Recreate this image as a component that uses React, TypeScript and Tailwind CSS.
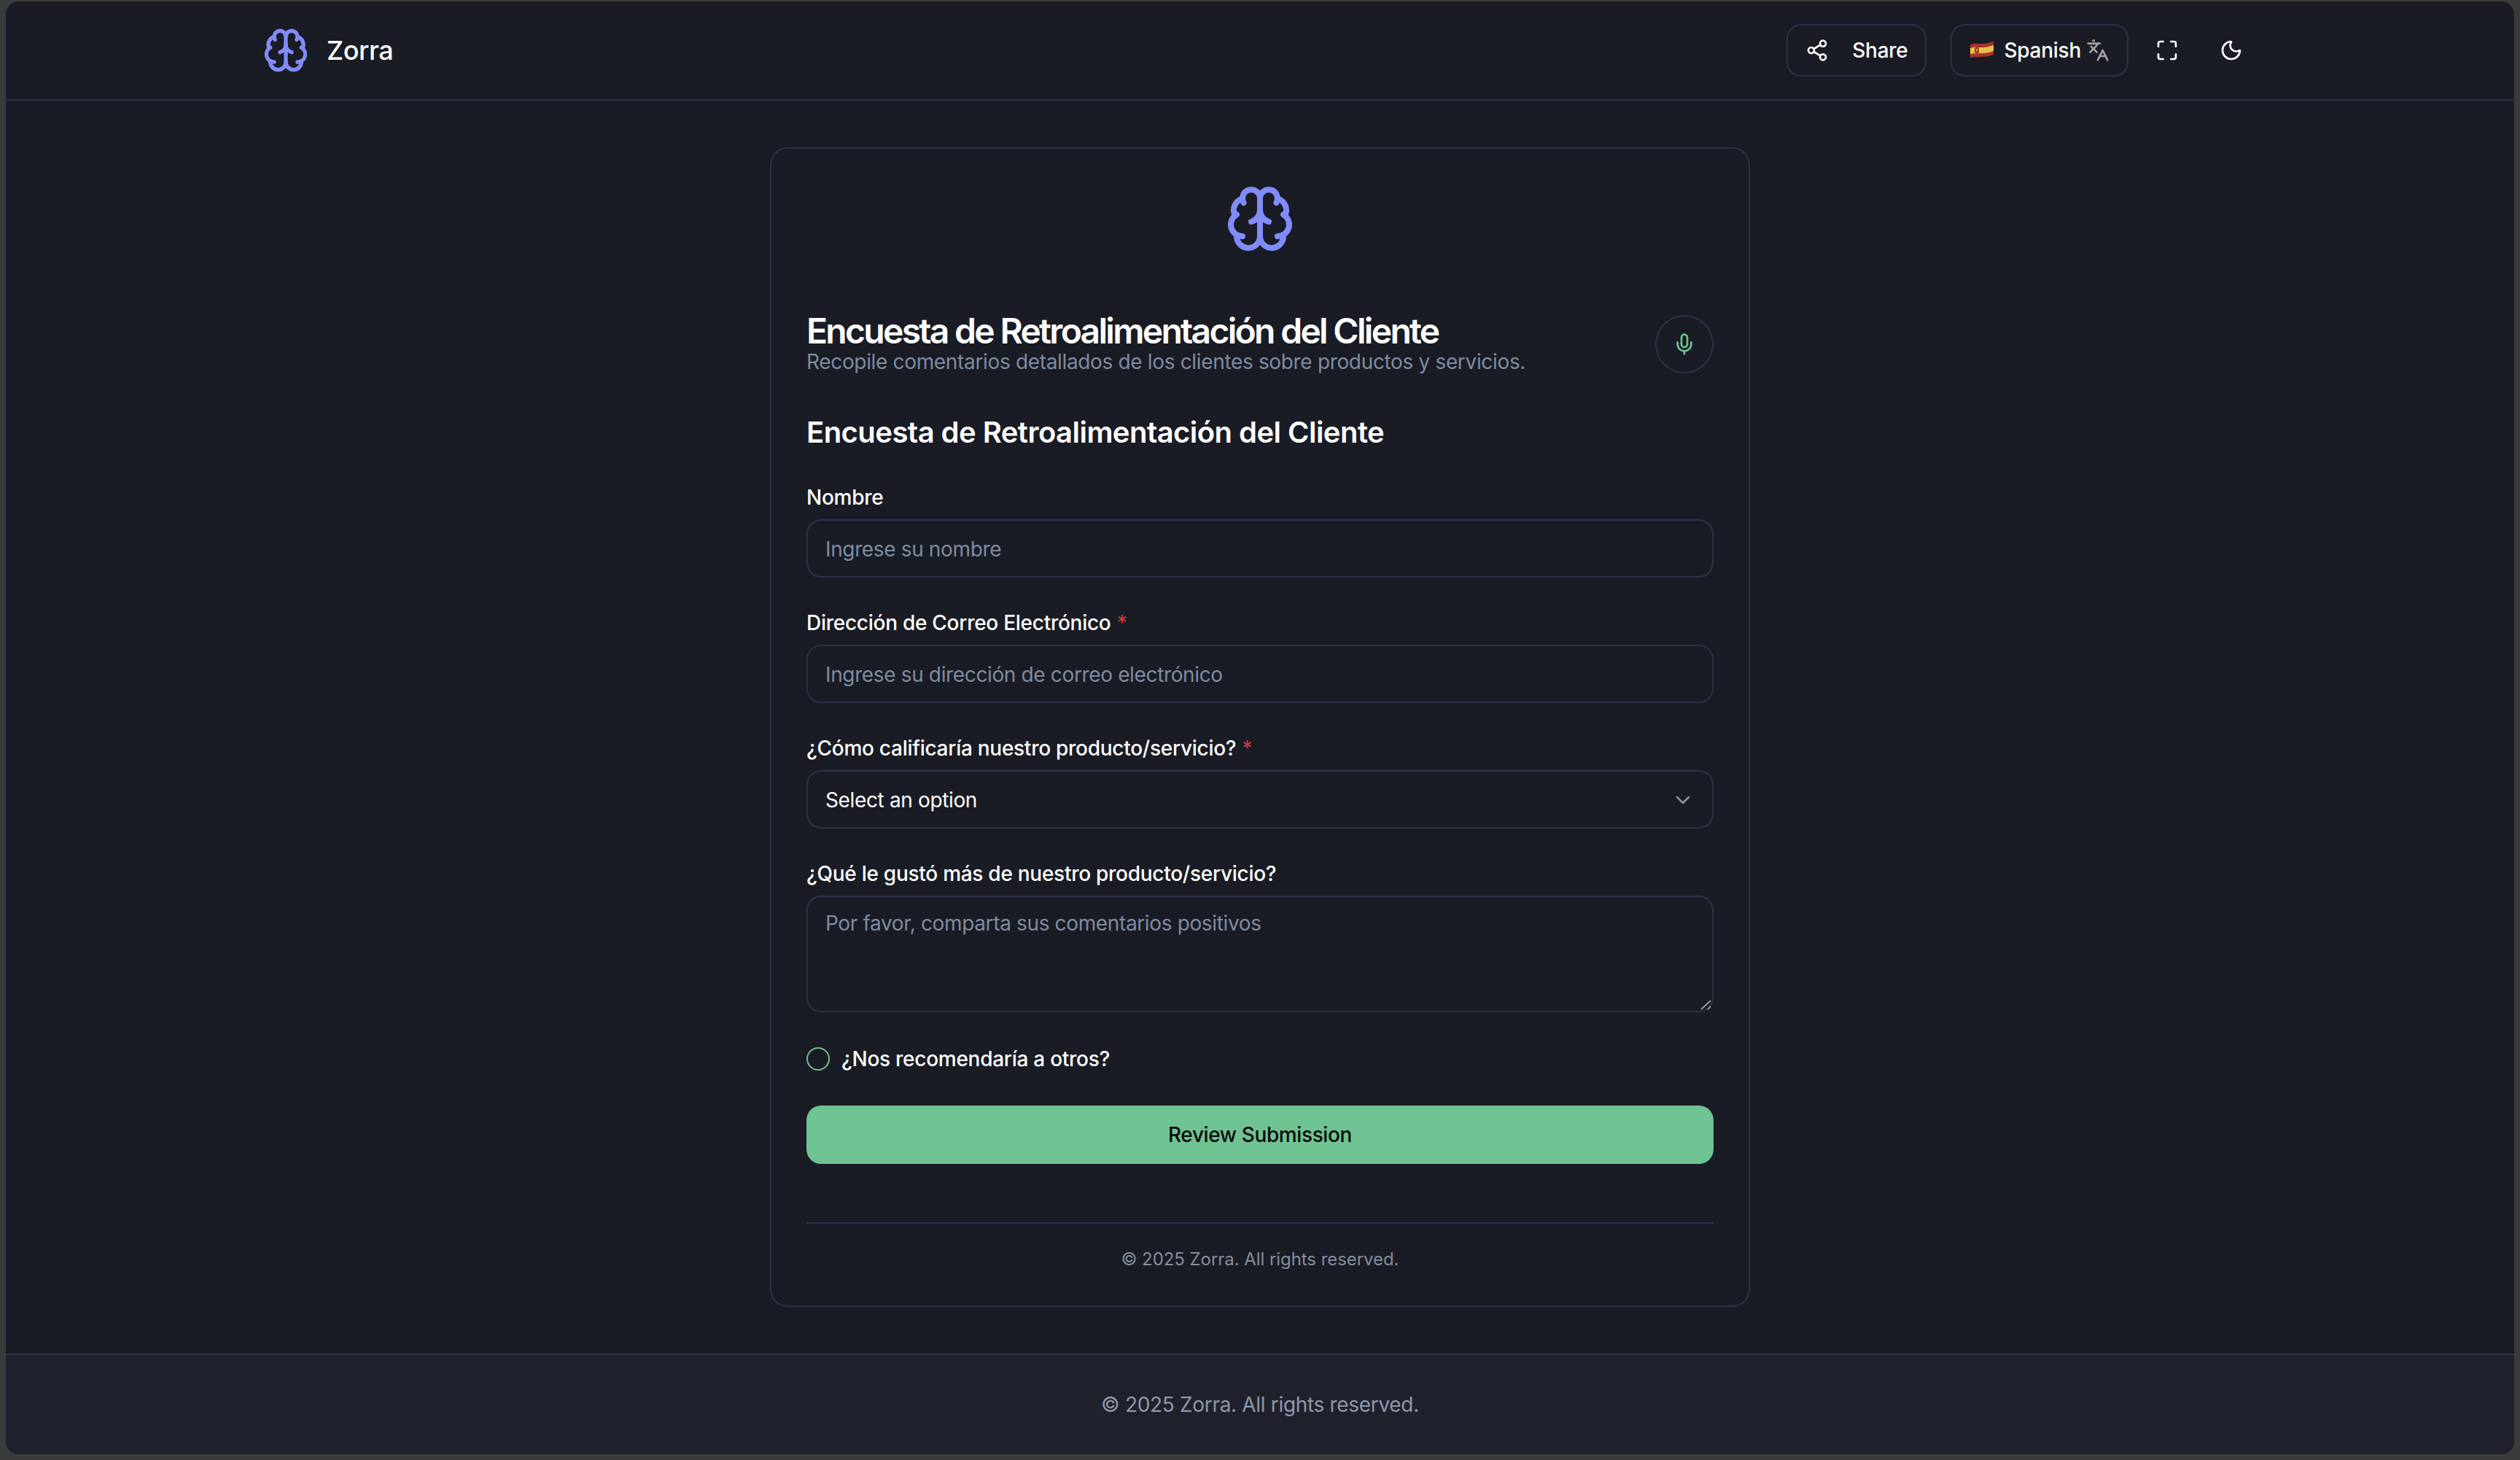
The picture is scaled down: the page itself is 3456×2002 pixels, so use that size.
import React from 'react';
import { Brain, ChevronDown, Languages, Maximize, Mic, Moon, Share2 } from 'lucide-react';

const inputClass =
  'h-[80px] w-full rounded-[20px] border-2 border-[#2c3149] bg-transparent px-[24px] pt-[2px] text-[28px] tracking-[-0.36px] text-white outline-none placeholder:text-[#7f8ba1]';

const labelClass = 'mb-[12px] block h-[40px] text-[28px] leading-[44px] font-medium tracking-[-0.27px] text-white';

const SpainFlag: React.FC = () => (
  <svg viewBox="0 0 34 24" className="-mt-[3px] h-[24px] w-[34px] shrink-0">
    <path d="M1 5C7 3 12 4 17 4S27 3 33 1V19C27 21 22 22 17 22S7 22 1 23Z" fill="#a8322c" />
    <path d="M1 10C7 8 12 9 17 9S27 8 33 6V14C27 16 22 17 17 17S7 17 1 18Z" fill="#e9c046" />
    <rect x="7" y="9" width="6" height="8" rx="2" fill="#9a3d2a" />
    <rect x="9" y="11" width="2" height="3" fill="#d9a13c" />
  </svg>
);

const Field: React.FC<{ label: string; required?: boolean; children: React.ReactNode }> = ({ label, required, children }) => (
  <div>
    <label className={labelClass}>
      {label}
      {required && <span className="ml-[8px] text-[#c93a33]">*</span>}
    </label>
    {children}
  </div>
);

export default function App() {
  return (
    <div className="h-[2002px] w-[3456px] bg-[#3b3b3b] px-[8px] pt-[2px] pb-[8px] font-[Inter,sans-serif]">
      <div className="flex h-full flex-col overflow-hidden rounded-[18px] bg-[#191c24]">
        <header className="h-[136px] shrink-0 border-b-2 border-[#2c3149]">
          <div className="flex h-full items-center justify-between pr-[348px] pl-[352px]">
            <div className="flex items-center gap-[24px]">
              <Brain className="h-[64px] w-[64px] text-[#818cf8]" strokeWidth={2} />
              <span className="text-[36px] font-medium tracking-[-0.4px] text-white">Zorra</span>
            </div>
            <div className="flex items-center">
              <button className="flex h-[72px] items-center gap-[32px] rounded-[20px] border-2 border-[#2c3149] px-[24px] text-[28px] font-medium tracking-[-0.27px] text-white">
                <Share2 className="h-[32px] w-[32px]" />
                Share
              </button>
              <button className="ml-[33px] flex h-[72px] items-center rounded-[20px] border-2 border-[#2c3149] px-[24px] text-[28px] font-medium tracking-[-0.27px] text-white">
                <SpainFlag />
                <span className="mr-[7px] ml-[13px]">Spanish</span>
                <Languages className="h-[32px] w-[32px] text-[#a3a3a3]" />
              </button>
              <button className="ml-[13px] flex h-[72px] w-[80px] items-center justify-center text-white">
                <Maximize className="h-[32px] w-[32px]" />
              </button>
              <button className="ml-[8px] flex h-[72px] w-[80px] items-center justify-center text-white">
                <Moon className="h-[32px] w-[32px]" />
              </button>
            </div>
          </div>
        </header>

        <main className="flex flex-1 justify-center py-[64px]">
          <div className="h-[1590px] w-[1344px] rounded-[24px] border-2 border-[#2c3149] p-[48px]">
            <div className="flex justify-center">
              <Brain className="h-[96px] w-[96px] text-[#818cf8]" />
            </div>
            <div className="mt-[80px] flex items-center justify-between">
              <div>
                <h1 className="h-[48px] text-[48px] leading-[52px] font-semibold tracking-[-2.7px] text-white">
                  Encuesta de Retroalimentación del Cliente
                </h1>
                <p className="text-[28px] leading-[40px] tracking-[-0.34px] text-[#7f8ba1]">
                  Recopile comentarios detallados de los clientes sobre productos y servicios.
                </p>
              </div>
              <button className="flex h-[80px] w-[80px] items-center justify-center rounded-full border-2 border-[#2c3149]">
                <Mic className="h-[32px] w-[32px] text-[#6fc392]" />
              </button>
            </div>

            <h2 className="mt-[48px] h-[56px] text-[40px] leading-[58px] font-semibold tracking-[-0.54px] text-white">
              Encuesta de Retroalimentación del Cliente
            </h2>

            <form className="mt-[40px] flex flex-col gap-[40px]">
              <Field label="Nombre">
                <input className={inputClass} placeholder="Ingrese su nombre" />
              </Field>
              <Field label="Dirección de Correo Electrónico" required>
                <input className={inputClass} placeholder="Ingrese su dirección de correo electrónico" />
              </Field>
              <Field label="¿Cómo calificaría nuestro producto/servicio?" required>
                <button type="button" className={`${inputClass} flex items-center justify-between text-left`}>
                  Select an option
                  <ChevronDown className="h-[32px] w-[32px] text-[#8f8f8f]" />
                </button>
              </Field>
              <Field label="¿Qué le gustó más de nuestro producto/servicio?">
                <div className="relative">
                  <textarea
                    className="block h-[160px] w-full resize-none rounded-[20px] border-2 border-[#2c3149] bg-transparent px-[24px] py-[16px] text-[28px] leading-[40px] tracking-[-0.36px] text-white outline-none placeholder:text-[#7f8ba1]"
                    placeholder="Por favor, comparta sus comentarios positivos"
                  />
                  {/* resize grip */}
                  <svg viewBox="0 0 16 16" className="absolute right-[3px] bottom-[3px] h-[16px] w-[16px]">
                    <path d="M2 15 15 3M11 15l4-4" stroke="#9a9a9a" strokeWidth="2" fill="none" />
                  </svg>
                </div>
              </Field>
              <div className="flex items-center gap-[16px] pt-[4px]">
                <span className="h-[32px] w-[32px] rounded-full border-2 border-[#6fc392]" />
                <span className="text-[28px] leading-[40px] font-medium tracking-[-0.27px] text-white">¿Nos recomendaría a otros?</span>
              </div>
            </form>

            <button className="mt-[44px] h-[80px] w-full rounded-[20px] bg-[#6fc392] text-[28px] font-medium tracking-[-0.39px] text-[#0a0a0a]">
              Review Submission
            </button>

            <div className="mt-[80px] h-[68px] border-t-2 border-[#2c3149] pt-[32px] text-center text-[24px] leading-[34px] tracking-[-0.06px] text-[#858e9e]">
              © 2025 Zorra. All rights reserved.
            </div>
          </div>
        </main>

        <footer className="flex h-[138px] shrink-0 items-center justify-center border-t-2 border-[#2c3149] bg-[#1f222d] text-[28px] tracking-[-0.32px] text-[#8f98a8]">
          © 2025 Zorra. All rights reserved.
        </footer>
      </div>
    </div>
  );
}
